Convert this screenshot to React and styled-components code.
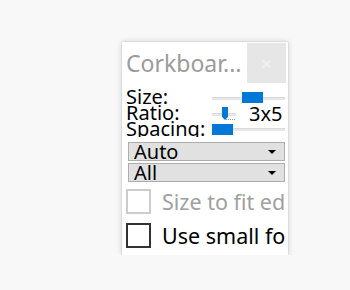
import React from "react";
import styled, { createGlobalStyle } from "styled-components";

const Global = createGlobalStyle`
  html, body { margin: 0; padding: 0; background: #f8f8f8; }
  body { font-family: "Noto Sans", "Open Sans", sans-serif; }
`;

const Page = styled.div`
  padding: 42px 0 0 122px;
`;

const Window = styled.div`
  width: 166px;
  height: 213px;
  background: #ffffff;
  box-shadow: 0 0 0 1px rgba(0, 0, 0, 0.04), 0 0 6px rgba(0, 0, 0, 0.18);
  display: flex;
  flex-direction: column;
  overflow: hidden;
`;

const TitleBar = styled.div`
  height: 42px;
  display: flex;
  align-items: center;
`;

const Title = styled.div`
  flex: 1;
  padding-left: 4px;
  color: #9b9b9b;
  font-size: 23px;
  line-height: 42px;
  white-space: nowrap;
  overflow: hidden;
`;

const Close = styled.div`
  flex: none;
  width: 39px;
  height: 40px;
  margin-right: 2px;
  background: #e6e6e6;
  color: #f2f2f2;
  display: flex;
  align-items: center;
  justify-content: center;
  font-size: 20px;
`;

const Body = styled.div`
  padding: 5px 3px 0 4px;
  display: flex;
  flex-direction: column;
`;

const Row = styled.div`
  display: grid;
  grid-template-columns: 86px 1fr;
  height: 16px;
  line-height: 16px;
  font-size: 20px;
  color: #000;
  overflow: hidden;
  white-space: nowrap;
`;

const Label = styled.span`
  display: block;
  height: 16px;
  line-height: 18px;
  margin-top: -1px;
`;

const Control = styled.div`
  position: relative;
  height: 16px;
  display: flex;
  align-items: center;
`;

const TrackArea = styled.div`
  position: relative;
  width: ${(p) => p.$w}px;
  height: 16px;
  flex: none;
`;

const Track = styled.div`
  position: absolute;
  left: 0;
  right: 0;
  top: ${(p) => p.$top}px;
  height: 2px;
  background: #e7e7e7;
  border-top: 1px solid #dadada;
`;

const Thumb = styled.div`
  position: absolute;
  top: ${(p) => p.$top}px;
  width: 21px;
  height: 11px;
  background: #0078d7;
`;

const PointerThumb = styled.div`
  position: absolute;
  top: 2px;
  width: 6px;
  height: 13px;
  background: #0078d7;
  clip-path: polygon(0 0, 100% 0, 100% 75%, 50% 100%, 0 75%);
`;

const Ticks = styled.div`
  position: absolute;
  top: 14px;
  left: 14px;
  width: 10px;
  height: 1px;
  background-image: linear-gradient(to right, #9a9a9a 1px, transparent 1px);
  background-size: 2px 1px;
`;

const ValueText = styled.span`
  margin-left: 13px;
  line-height: 18px;
  margin-top: 1px;
`;

const Select = styled.div`
  margin-left: 2px;
  height: 17px;
  border: 1px solid #adadad;
  background: #e1e1e1;
  display: flex;
  align-items: center;
  justify-content: space-between;
  padding: 0 8px 0 5px;
  font-size: 20px;
  line-height: 17px;
  color: #000;
  margin-top: ${(p) => p.$mt}px;
  overflow: hidden;
`;

const Arrow = styled.span`
  width: 0;
  height: 0;
  border-left: 4px solid transparent;
  border-right: 4px solid transparent;
  border-top: 4px solid #000;
`;

const CheckRow = styled.div`
  display: flex;
  align-items: center;
  gap: 11px;
  height: 25px;
  margin-top: ${(p) => p.$mt}px;
  white-space: nowrap;
  overflow: hidden;
  font-size: 21.5px;
  color: ${(p) => (p.$disabled ? "#a0a0a0" : "#000")};
`;

const Box = styled.div`
  flex: none;
  width: 21px;
  height: 21px;
  border: 2px solid ${(p) => (p.$disabled ? "#cccccc" : "#333333")};
  background: #fff;
`;

function Slider({ width, value, trackTop, thumbTop }) {
  return (
    <TrackArea $w={width}>
      <Track $top={trackTop} />
      <Thumb $top={thumbTop} style={{ left: value }} />
    </TrackArea>
  );
}

export default function App() {
  return (
    <>
      <Global />
      <Page>
        <Window>
          <TitleBar>
            <Title>Corkboar...</Title>
            <Close>×</Close>
          </TitleBar>
          <Body>
            <Row>
              <Label>Size:</Label>
              <Control>
                <Slider width={73} value={30} trackTop={8} thumbTop={3} />
              </Control>
            </Row>
            <Row>
              <Label>Ratio:</Label>
              <Control>
                <TrackArea $w={24}>
                  <Track $top={8} />
                  <PointerThumb style={{ left: 10 }} />
                  <Ticks />
                </TrackArea>
                <ValueText>3x5</ValueText>
              </Control>
            </Row>
            <Row>
              <Label>Spacing:</Label>
              <Control>
                <Slider width={73} value={0} trackTop={7} thumbTop={3} />
              </Control>
            </Row>
            <Select $mt={5}>
              <span>Auto</span>
              <Arrow />
            </Select>
            <Select $mt={2}>
              <span>All</span>
              <Arrow />
            </Select>
            <CheckRow $mt={7} $disabled>
              <Box $disabled />
              <span>Size to fit edge</span>
            </CheckRow>
            <CheckRow $mt={9}>
              <Box />
              <span>Use small font</span>
            </CheckRow>
          </Body>
        </Window>
      </Page>
    </>
  );
}
